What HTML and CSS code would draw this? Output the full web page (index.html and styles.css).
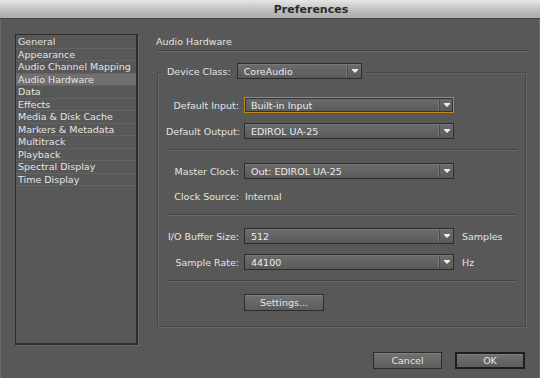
FILE: index.html
```html
<!DOCTYPE html>
<html lang="en">
<head>
  <meta charset="UTF-8" />
  <title>Preferences</title>
  <link rel="stylesheet" href="styles.css">
</head>
<body>

<div class="window">
  <div class="titlebar">Preferences</div>

  <div class="main">
    <ul class="sidebar">
      <li>General</li>
      <li>Appearance</li>
      <li>Audio Channel Mapping</li>
      <li class="active">Audio Hardware</li>
      <li>Data</li>
      <li>Effects</li>
      <li>Media &amp; Disk Cache</li>
      <li>Markers &amp; Metadata</li>
      <li>Multitrack</li>
      <li>Playback</li>
      <li>Spectral Display</li>
      <li>Time Display</li>
    </ul>

    <div class="panel">
      <div class="panel-title">Audio Hardware</div>

      <div class="group">
        <div class="legend">
          <span class="legend-label">Device Class:</span>
          <div class="select select-class"><span>CoreAudio</span><i class="arrow"></i></div>
        </div>

        <div class="row first">
          <label>Default Input:</label>
          <div class="select focus"><span>Built-in Input</span><i class="arrow"></i></div>
        </div>
        <div class="row">
          <label>Default Output:</label>
          <div class="select"><span>EDIROL UA-25</span><i class="arrow"></i></div>
        </div>

        <div class="sep"></div>

        <div class="row">
          <label>Master Clock:</label>
          <div class="select"><span>Out: EDIROL UA-25</span><i class="arrow"></i></div>
        </div>
        <div class="row text-row">
          <label>Clock Source:</label>
          <span class="value">Internal</span>
        </div>

        <div class="sep"></div>

        <div class="row">
          <label>I/O Buffer Size:</label>
          <div class="select"><span>512</span><i class="arrow"></i></div>
          <span class="unit">Samples</span>
        </div>
        <div class="row">
          <label>Sample Rate:</label>
          <div class="select"><span>44100</span><i class="arrow"></i></div>
          <span class="unit">Hz</span>
        </div>

        <div class="sep"></div>

        <div class="row settings-row">
          <button class="btn settings">Settings...</button>
        </div>
      </div>
    </div>
  </div>

  <div class="footer">
    <button class="btn cancel">Cancel</button>
    <button class="btn ok">OK</button>
  </div>
</div>

</body>
</html>
```

FILE: styles.css
```css
body {
  margin: 0;
  background-color: #585858;
  font-family: "DejaVu Sans", Verdana, sans-serif;
  font-size: 9.5px;
  color: #e4e4e4;
}

.window {
  width: 540px;
  height: 378px;
  display: flex;
  flex-direction: column;
  box-shadow: inset 1px 0 0 #6c6c6c, inset -1px 0 0 #6c6c6c;
}

.titlebar {
  height: 19px;
  line-height: 19px;
  padding-left: 82px;
  text-align: center;
  font-size: 11px;
  font-weight: bold;
  color: #2a2a2a;
  background: linear-gradient(#e6e6e6, #bcbcbc 60%, #ababab);
  border-bottom: 1px solid #444;
  box-sizing: border-box;
}

.main {
  display: flex;
  padding: 15px 13px 0 15px;
  height: 311px;
}

/* left category list */
.sidebar {
  list-style: none;
  margin: 0;
  padding: 1px 0 0 0;
  width: 123px;
  height: 311px;
  box-sizing: border-box;
  border: 1px solid #2e2e2e;
  border-right-width: 2px;
  border-bottom-width: 2px;
  box-shadow: 1px 1px 0 #686868;
}

.sidebar li {
  height: 12.5px;
  line-height: 12px;
  padding-left: 2px;
  border-bottom: 1px solid #636363;
  box-sizing: border-box;
  white-space: nowrap;
  overflow: hidden;
}

.sidebar li.active {
  background-color: #707070;
}

/* right panel */
.panel {
  flex: 1;
  margin-left: 18px;
}

.panel-title {
  height: 16px;
  line-height: 16px;
  border-bottom: 1px solid #444;
  box-shadow: 0 1px 0 #686868;
}

.group {
  margin: 21px 1px 0 1px;
  border: 1px solid #474747;
  box-shadow: inset 1px 1px 0 #666, 1px 1px 0 #666;
  padding: 0 8px 15px 8px;
  height: 255px;
  box-sizing: border-box;
}

.legend {
  display: flex;
  align-items: center;
  margin-top: -10px;
  margin-left: -4px;
  padding: 0 3px 0 5px;
  width: fit-content;
  background-color: #585858;
}

.legend-label {
  margin-right: 6px;
}

.row {
  display: flex;
  align-items: center;
  height: 16px;
  margin-top: 10px;
}

.row.first {
  margin-top: 18px;
}

.row label {
  width: 73px;
  text-align: right;
  margin-right: 5px;
  white-space: nowrap;
}

.text-row {
  margin-top: 9px;
}

.value {
  margin-left: 1px;
}

.unit {
  margin-left: 8px;
}

.sep {
  height: 1px;
  margin-top: 10px;
  border-bottom: 1px solid #686868;
  background-color: #444;
}

.sep + .row {
  margin-top: 12px;
}

/* dropdowns */
.select {
  position: relative;
  width: 210px;
  height: 16px;
  box-sizing: border-box;
  border: 1px solid #2c2c2c;
  background: linear-gradient(#6c6c6c, #5a5a5a);
  box-shadow: inset 0 1px 0 #787878;
  display: flex;
  align-items: center;
  padding-left: 6px;
  color: #ececec;
}

.select span {
  flex: 1;
  white-space: nowrap;
}

.select-class {
  width: 125px;
}

.select.focus {
  border-color: #c18a14;
  box-shadow: inset 0 0 0 1px #333;
}

.select .arrow {
  width: 13px;
  height: 12px;
  border-left: 1px solid #4a4a4a;
  box-shadow: -1px 0 0 #777;
  position: relative;
}

.select .arrow::before {
  content: "";
  position: absolute;
  left: 4px;
  top: 4px;
  width: 6px;
  height: 1px;
  background-color: #eee;
}

.select .arrow::after {
  content: "";
  position: absolute;
  left: 4px;
  top: 5px;
  border-left: 3px solid transparent;
  border-right: 3px solid transparent;
  border-top: 3px solid #eee;
}

/* buttons */
.btn {
  height: 17px;
  box-sizing: border-box;
  border: 1px solid #2c2c2c;
  background: linear-gradient(#727272, #5c5c5c);
  box-shadow: inset 0 1px 0 #7e7e7e;
  color: #e4e4e4;
  font-family: inherit;
  font-size: 9.5px;
  padding: 0;
}

.settings-row {
  margin-top: 13px;
}

.settings {
  width: 80px;
  margin-left: 78px;
}

.footer {
  display: flex;
  justify-content: flex-end;
  gap: 13px;
  padding: 7px 15px 0 0;
}

.cancel {
  width: 69px;
}

.ok {
  width: 70px;
  border: 2px solid #1e1e1e;
}
```
